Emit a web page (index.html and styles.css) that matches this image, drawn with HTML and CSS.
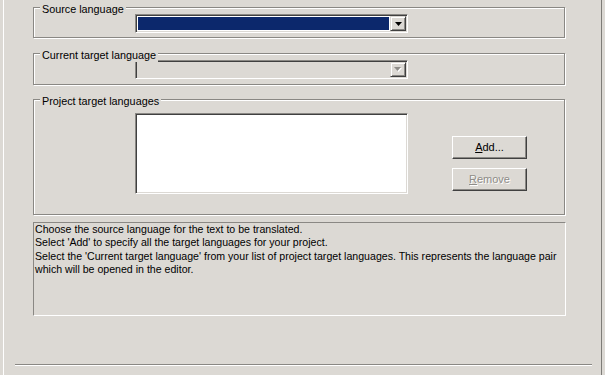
FILE: index.html
```html
<!DOCTYPE html>
<html>
<head>
<meta charset="utf-8">
<title>Languages</title>
<link rel="stylesheet" href="styles.css">
</head>
<body>
<div class="window">
  <div class="panel">
    <div class="content">
      <div class="group group-source">
        <span class="group-label">Source language</span>
        <div class="combo">
          <div class="combo-field"><div class="combo-value selected"></div></div>
          <div class="combo-btn">
            <svg class="arrow" width="7" height="4" viewBox="0 0 7 4"><polygon points="0,0 7,0 3.5,4" fill="#000"/></svg>
          </div>
        </div>
      </div>

      <div class="group group-current">
        <span class="group-label">Current target language</span>
        <div class="combo combo-disabled">
          <div class="combo-field"><div class="combo-value"></div></div>
          <div class="combo-btn">
            <svg class="arrow" width="8" height="5" viewBox="0 0 8 5"><polygon points="1,1 8,1 4.5,5" fill="#fff"/><polygon points="0,0 7,0 3.5,4" fill="#8e8c88"/></svg>
          </div>
        </div>
      </div>

      <div class="group group-project">
        <span class="group-label">Project target languages</span>
        <div class="listbox"></div>
        <div class="buttons">
          <div class="btn"><span><u>A</u>dd...</span></div>
          <div class="btn btn-disabled"><span><u>R</u>emove</span></div>
        </div>
      </div>

      <div class="desc">
        <div class="desc-line">Choose the source language for the text to be translated.</div>
        <div class="desc-line">Select 'Add' to specify all the target languages for your project.</div>
        <div class="desc-line">Select the 'Current target language' from your list of project target languages. This represents the language pair</div>
        <div class="desc-line">which will be opened in the editor.</div>
      </div>
    </div>
    <div class="separator"></div>
  </div>
</div>
</body>
</html>
```

FILE: styles.css
```css
* {
  box-sizing: border-box;
}

html,
body {
  margin: 0;
  padding: 0;
}

body {
  background: #dcd9d4;
  font-family: "Liberation Sans", Arial, sans-serif;
  font-size: 11px;
  color: #000;
}

.window {
  width: 605px;
  height: 375px;
  padding: 0 3px;
  display: flex;
}

.panel {
  flex: 1;
  border-left: 1px solid #ffffff;
  border-right: 1px solid #7e7c78;
  display: flex;
  flex-direction: column;
}

.content {
  padding: 7px 0 0 29px;
  display: flex;
  flex-direction: column;
}

.group {
  position: relative;
  width: 532px;
  border: 1px solid #8a8884;
  box-shadow: inset 1px 1px 0 #ffffff, 1px 1px 0 #ffffff;
}

.group-label {
  position: absolute;
  left: 6px;
  top: -5px;
  padding: 0 2px;
  line-height: 13px;
  font-size: 10.8px;
  background: #dcd9d4;
  white-space: nowrap;
}

.group-source {
  height: 31px;
  padding: 6px 0 0 101px;
}

.group-current {
  margin-top: 15px;
  height: 32px;
  padding: 6px 0 0 101px;
}

.group-project {
  margin-top: 14px;
  height: 116px;
  padding: 13px 0 0 101px;
  display: flex;
  align-items: flex-start;
}

/* combo box */
.combo {
  width: 273px;
  height: 19px;
  display: flex;
  border: 1px solid;
  border-color: #8a8884 #ffffff #ffffff #8a8884;
  padding: 1px;
  background: #ffffff;
  box-shadow: inset 1px 1px 0 #404040, inset -1px -1px 0 #dcd9d4;
}

.combo-field {
  flex: 1;
  padding: 1px;
}

.combo-value {
  height: 100%;
}

.combo-value.selected {
  background: #0c286c;
}

.combo-disabled {
  background: #dcd9d4;
}

.combo-btn {
  width: 16px;
  height: 15px;
  display: flex;
  align-items: center;
  justify-content: center;
  background: #dcd9d4;
  border: 1px solid;
  border-color: #dcd9d4 #404040 #404040 #dcd9d4;
  box-shadow: inset 1px 1px 0 #ffffff, inset -1px -1px 0 #8a8884;
}

.arrow {
  display: block;
}

/* list box */
.listbox {
  width: 273px;
  height: 81px;
  background: #ffffff;
  border: 1px solid;
  border-color: #8a8884 #ffffff #ffffff #8a8884;
  box-shadow: inset 1px 1px 0 #404040, inset -1px -1px 0 #dcd9d4;
}

.buttons {
  margin-left: 44px;
  padding-top: 23px;
  display: flex;
  flex-direction: column;
  gap: 9px;
}

.btn {
  width: 75px;
  height: 23px;
  display: flex;
  align-items: center;
  justify-content: center;
  background: #dcd9d4;
  border: 1px solid;
  border-color: #ffffff #404040 #404040 #ffffff;
  box-shadow: inset -1px -1px 0 #8a8884;
  padding-bottom: 1px;
}

.btn-disabled {
  color: #8e8c88;
  text-shadow: 1px 1px 0 #ffffff;
}

/* description */
.desc {
  margin-top: 7px;
  width: 533px;
  height: 94px;
  border: 1px solid;
  border-color: #8a8884 #ffffff #ffffff #8a8884;
  padding: 0 1px;
  font-size: 10.6px;
  line-height: 13.3px;
}

.desc-line {
  white-space: nowrap;
}

.separator {
  margin-top: 48px;
  margin-left: 11px;
  width: 577px;
  height: 2px;
  border-top: 1px solid #8a8884;
  border-bottom: 1px solid #ffffff;
}
```
